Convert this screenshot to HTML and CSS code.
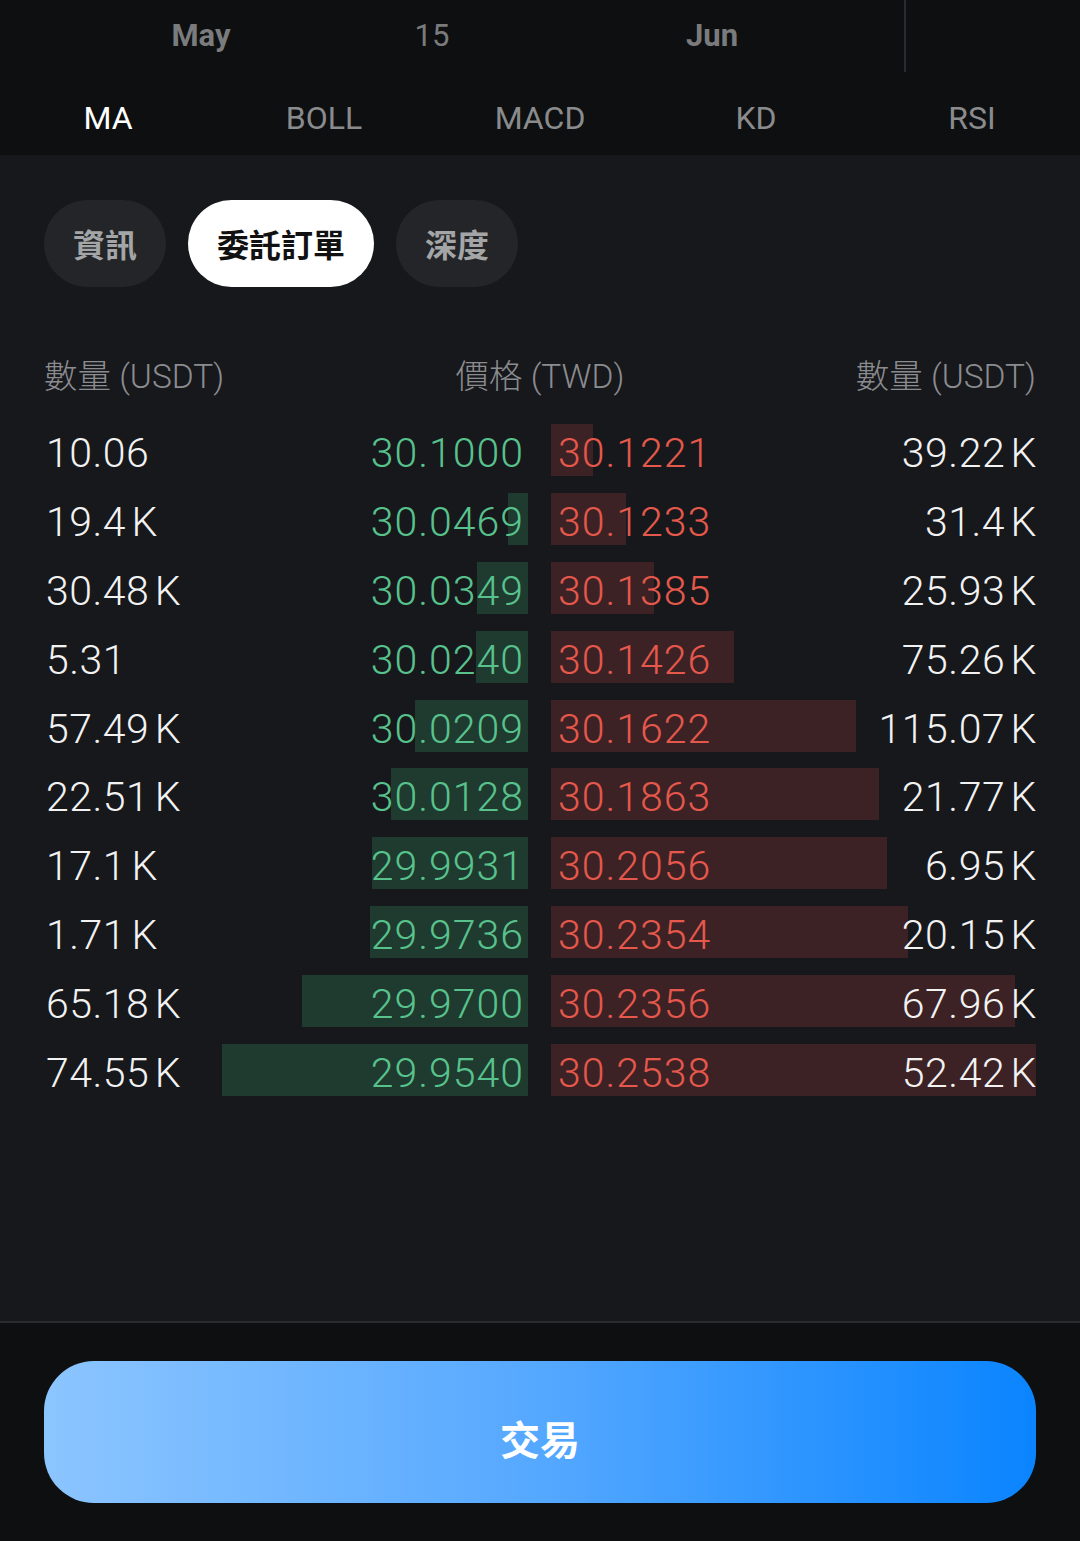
FILE: index.html
```html
<!DOCTYPE html>
<html lang="zh-Hant">
<head>
  <meta charset="UTF-8" />
  <title>委託訂單</title>
  <link rel="stylesheet" href="styles.css">
</head>
<body>
  <div class="chart-top">
    <div class="axis">
      <span class="tick bold" style="left:201px">May</span>
      <span class="tick" style="left:432px">15</span>
      <span class="tick bold" style="left:712px">Jun</span>
      <div class="now-line"></div>
    </div>
    <div class="indicators">
      <div class="ind active">MA</div>
      <div class="ind">BOLL</div>
      <div class="ind">MACD</div>
      <div class="ind">KD</div>
      <div class="ind">RSI</div>
    </div>
  </div>

  <div class="main">
    <div class="pills">
      <div class="pill">資訊</div>
      <div class="pill active">委託訂單</div>
      <div class="pill">深度</div>
    </div>

    <div class="book-head">
      <span>數量 (USDT)</span>
      <span class="center">價格 (TWD)</span>
      <span class="right">數量 (USDT)</span>
    </div>

    <div class="book" id="book"></div>
  </div>

  <div class="bottom">
    <button class="trade-btn">交易</button>
  </div>

  <script>
    // [買量, 買價, 買深度px, 賣價, 賣量, 賣深度px]
    const rows = [
      ['10.06',   '30.1000', 0,   '30.1221', '39.22 K',  42],
      ['19.4 K',  '30.0469', 20,  '30.1233', '31.4 K',   75],
      ['30.48 K', '30.0349', 51,  '30.1385', '25.93 K',  103],
      ['5.31',    '30.0240', 52,  '30.1426', '75.26 K',  183],
      ['57.49 K', '30.0209', 113, '30.1622', '115.07 K', 305],
      ['22.51 K', '30.0128', 137, '30.1863', '21.77 K',  328],
      ['17.1 K',  '29.9931', 156, '30.2056', '6.95 K',   336],
      ['1.71 K',  '29.9736', 158, '30.2354', '20.15 K',  357],
      ['65.18 K', '29.9700', 226, '30.2356', '67.96 K',  464],
      ['74.55 K', '29.9540', 306, '30.2538', '52.42 K',  485]
    ];

    const book = document.getElementById('book');
    rows.forEach(r => {
      const row = document.createElement('div');
      row.className = 'row';
      row.innerHTML = `
        <div class="side bid">
          <div class="depth" style="width:${r[2]}px"></div>
          <span class="qty">${r[0]}</span>
          <span class="price">${r[1]}</span>
        </div>
        <div class="side ask">
          <div class="depth" style="width:${r[5]}px"></div>
          <span class="price">${r[3]}</span>
          <span class="qty">${r[4]}</span>
        </div>`;
      book.appendChild(row);
    });
  </script>
</body>
</html>
```

FILE: styles.css
```css
body {
  margin: 0;
  background: #17181c;
  color: #f2f2f2;
  font-family: Roboto, "Noto Sans CJK TC", sans-serif;
  width: 1080px;
  height: 1541px;
  overflow: hidden;
}

.chart-top {
  background: #0e0f11;
  height: 155px;
}

.axis {
  position: relative;
  height: 72px;
}

.tick {
  position: absolute;
  top: 16px;
  transform: translateX(-50%);
  font-size: 31px;
  line-height: 40px;
  color: #7a7b7d;
}
.tick.bold { font-weight: 700; }

.now-line {
  position: absolute;
  left: 904px;
  top: 0;
  width: 2px;
  height: 72px;
  background: #2a2b2e;
}

.indicators {
  display: grid;
  grid-template-columns: repeat(5, 1fr);
  height: 83px;
  align-items: center;
}

.ind {
  text-align: center;
  font-size: 32px;
  color: #8a8b8d;
  padding-top: 8px;
}
.ind.active { color: #fff; }

.main {
  height: 1168px;
  padding: 45px 44px 0;
  box-sizing: border-box;
  border-bottom: 2px solid #2a2b2d;
}

.pills {
  display: flex;
  gap: 22px;
}

.pill {
  height: 87px;
  line-height: 87px;
  padding: 0 29px;
  border-radius: 44px;
  background: #232528;
  color: #a4a5a7;
  font-family: "Noto Sans CJK TC", sans-serif;
  font-weight: 700;
  font-size: 32px;
}
.pill.active {
  background: #fff;
  color: #111;
}

.book-head {
  display: grid;
  grid-template-columns: 1fr 1fr 1fr;
  margin-top: 70px;
  height: 40px;
  line-height: 40px;
  font-size: 33.5px;
  font-weight: 300;
  color: #8b8c8f;
}
.book-head .center { text-align: center; }
.book-head .right { text-align: right; }

.book {
  margin-top: 19px;
}

.row {
  display: grid;
  grid-template-columns: 484px 485px;
  column-gap: 23px;
  height: 68.8px;
  align-items: center;
}

.side {
  position: relative;
  height: 52px;
  display: flex;
  align-items: center;
  justify-content: space-between;
  font-size: 41px;
  font-weight: 300;
}

.side span {
  position: relative;
  top: 3px;
}

.depth {
  position: absolute;
  top: 0;
  bottom: 0;
}

.bid .depth { right: 0; background: #1f3a2f; }
.ask .depth { left: 0; background: #3c2225; }

.side .qty {
  letter-spacing: 0.5px;
  word-spacing: -5px;
}
.side .price { letter-spacing: 1px; }

.bid .qty { padding-left: 2px; }
.bid .price { color: #58c28d; margin-right: 4px; }
.ask .price { color: #e5584b; padding-left: 7px; }
.ask .qty { margin-right: -1px; }

.bottom {
  background: #0e0f11;
  padding: 38px 44px;
}

.trade-btn {
  display: block;
  width: 100%;
  height: 142px;
  border: none;
  border-radius: 50px;
  background: linear-gradient(90deg, #8cc5ff, #55a8ff 50%, #0a84ff);
  color: #fff;
  font-family: "Noto Sans CJK TC", sans-serif;
  font-weight: 700;
  font-size: 40px;
  padding-top: 12px;
  cursor: pointer;
}
```
